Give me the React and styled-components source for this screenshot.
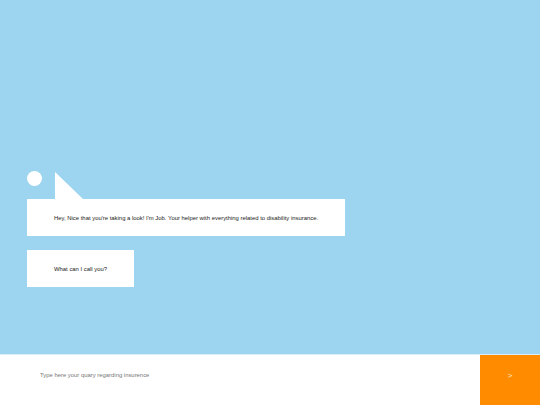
import React from 'react';
import styled, { createGlobalStyle } from 'styled-components';

const GlobalStyle = createGlobalStyle`
  html, body, #root {
    margin: 0;
    padding: 0;
    height: 100%;
  }

  body {
    font-family: 'Liberation Sans', Arial, sans-serif;
    background-color: #9dd4ef;
  }
`;

const Page = styled.div`
  display: flex;
  flex-direction: column;
  height: 100vh;
`;

const ChatArea = styled.div`
  flex: 1;
  display: flex;
  flex-direction: column;
  justify-content: flex-end;
  align-items: flex-start;
  padding: 0 0 67px 27px;
`;

const AvatarRow = styled.div`
  display: flex;
  align-items: flex-start;
  height: 28px;
`;

const Avatar = styled.div`
  width: 15px;
  height: 15px;
  border-radius: 50%;
  background-color: white;
`;

const Tail = styled.div`
  width: 0;
  height: 0;
  margin-top: 1px;
  margin-left: 13px;
  border-left: 28px solid white;
  border-top: 27px solid transparent;
`;

const Bubble = styled.div`
  display: flex;
  align-items: center;
  height: 37px;
  padding: 0 27px;
  margin-bottom: ${props => (props.last ? '0' : '14px')};
  background-color: white;
  font-size: 5.9px;
  color: #222;
  white-space: nowrap;
`;

const InputBar = styled.form`
  display: flex;
  align-items: stretch;
  height: 51px;
  background-color: white;
  border-top: 1px solid #d8eef9;
  box-sizing: border-box;
`;

const QueryInput = styled.input`
  flex: 1;
  align-self: flex-start;
  height: 40px;
  border: none;
  outline: none;
  padding: 0 0 0 40px;
  font-family: 'Liberation Sans', Arial, sans-serif;
  font-size: 5.9px;
  color: #333;
  background: transparent;

  &::placeholder {
    color: #777;
  }
`;

const SendButton = styled.button`
  width: 60px;
  padding: 0 0 10px;
  border: none;
  background-color: #ff8c00;
  color: #ffe9c8;
  font-family: 'Liberation Sans', Arial, sans-serif;
  font-size: 8px;

  &:hover {
    cursor: pointer;
  }
`;

const App = () => {
  return (
    <>
      <GlobalStyle />
      <Page>
        <ChatArea>
          <AvatarRow>
            <Avatar />
            <Tail />
          </AvatarRow>
          <Bubble>
            Hey, Nice that you're taking a look! I'm Job. Your helper with everything related to disability insurance.
          </Bubble>
          <Bubble last>What can I call you?</Bubble>
        </ChatArea>
        <InputBar onSubmit={e => e.preventDefault()}>
          <QueryInput placeholder="Type here your quary regarding insurence" autoFocus />
          <SendButton type="submit">&gt;</SendButton>
        </InputBar>
      </Page>
    </>
  );
};

export default App;
